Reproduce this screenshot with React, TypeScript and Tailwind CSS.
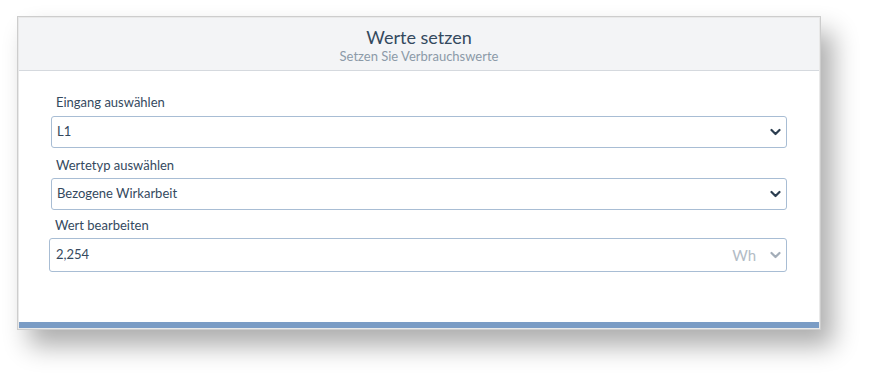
import React from "react";

function Chevron({ color }: { color: string }) {
  return (
    <svg width="11" height="8" viewBox="0 0 11 8" className="shrink-0">
      <path d="M1.5 2 L5.5 6 L9.5 2" fill="none" stroke={color} strokeWidth="2.2" strokeLinecap="round" strokeLinejoin="round" />
    </svg>
  );
}

export default function App() {
  const font = { fontFamily: "Lato, 'Noto Sans', sans-serif" };
  return (
    <div className="w-[870px] h-[378px] bg-white pt-[16px] pl-[17px]" style={font}>
      <div className="w-[804px] border border-[#cdcdcd] bg-[#e9e9e9] p-px shadow-[12px_16px_24px_rgba(0,0,0,0.32)]">
        <div className="w-[800px] bg-white flex flex-col">
          <div className="h-[53px] bg-[#f3f4f6] border-b border-[#d5d9de] flex flex-col items-center pt-[7px]">
            <div className="text-[18px] leading-[24px] text-[#34495e]">Werte setzen</div>
            <div className="text-[13px] leading-[17px] text-[#8c9aa8] -mt-[1px]">Setzen Sie Verbrauchswerte</div>
          </div>
          <div className="px-[32px] pt-[22px] pb-[50px] flex flex-col text-[13px] text-[#34495e]">
            <div className="pl-[5px] leading-[18px] mb-[5px]">Eingang auswählen</div>
            <div className="h-[32px] border border-[#a8bdd4] rounded-[3px] flex items-center pl-[5px] pr-[5px]">
              <span className="flex-1">L1</span>
              <Chevron color="#2c3e50" />
            </div>
            <div className="pl-[5px] leading-[18px] mt-[8px] mb-[4px]">Wertetyp auswählen</div>
            <div className="h-[32px] border border-[#a8bdd4] rounded-[3px] flex items-center pl-[5px] pr-[5px]">
              <span className="flex-1">Bezogene Wirkarbeit</span>
              <Chevron color="#2c3e50" />
            </div>
            <div className="pl-[4px] leading-[18px] mt-[6px] mb-[4px]">Wert bearbeiten</div>
            <div className="h-[34px] -ml-[2px] border border-[#a8bdd4] rounded-[3px] flex items-center pl-[6px] pr-[5px]">
              <span className="flex-1">2,254</span>
              <span className="text-[15px] text-[#b3bcc6] mr-[14px]">Wh</span>
              <Chevron color="#a3adb8" />
            </div>
          </div>
          <div className="h-[6px] bg-[#7a9cc5]" />
        </div>
      </div>
    </div>
  );
}
